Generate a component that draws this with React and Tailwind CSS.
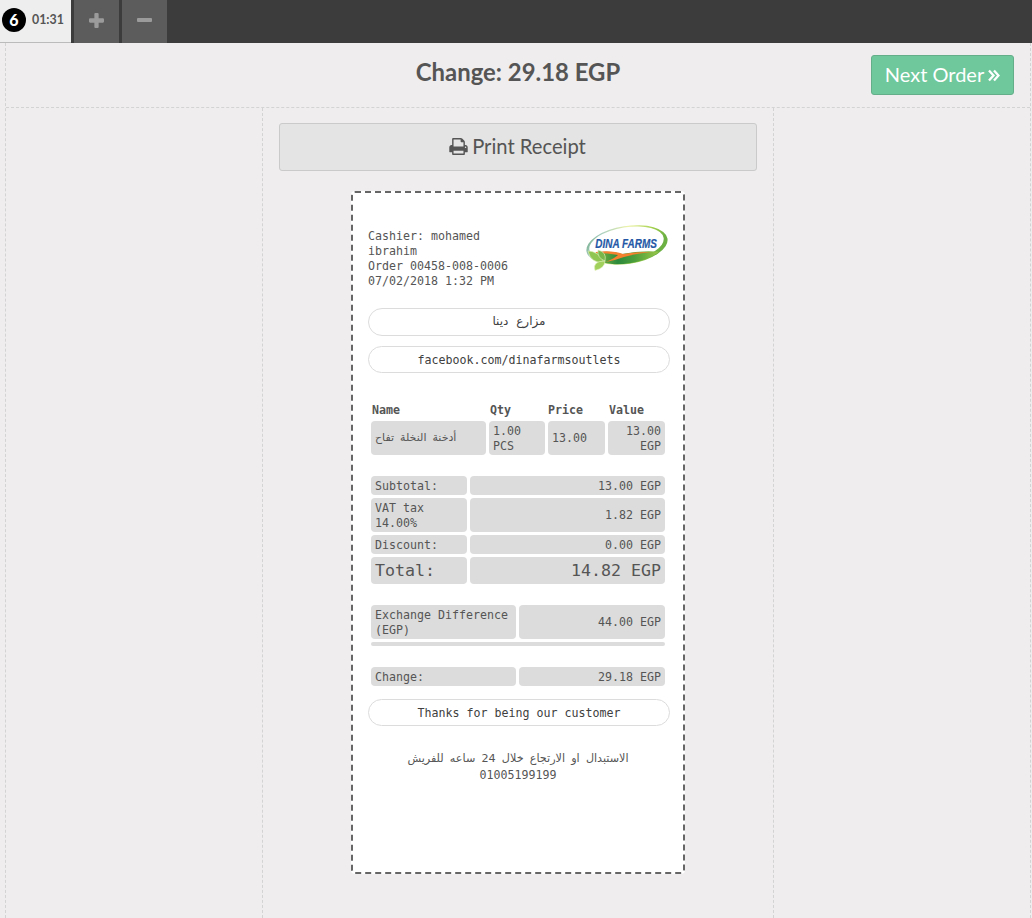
import React from "react";

const cell = "flex items-center rounded-[4px] bg-[#dcdcdc] px-1 leading-[15px]";
const pill =
  "flex w-[302px] shrink-0 items-center justify-center rounded-full border border-[#dcdcdc] text-[#404040]";
const arabic = "font-['DejaVu_Sans',sans-serif]";

function PrintIcon() {
  return (
    <svg viewBox="64 128 1664 1536" className="h-[17px] w-[19px]" fill="currentColor">
      <path d="M448 1536h896v-256h-896v256zm0-640h896v-384h-160q-40 0-68-28t-28-68v-160h-640v640zm1152 64q0-26-19-45t-45-19-45 19-19 45 19 45 45 19 45-19 19-45zm128 0v416q0 13-9.5 22.5t-22.5 9.5h-224v160q0 40-28 68t-68 28h-960q-40 0-68-28t-28-68v-160h-224q-13 0-22.5-9.5t-9.5-22.5v-416q0-79 56.5-135.5t135.5-56.5h64v-544q0-40 28-68t68-28h672q40 0 88 20t76 48l152 152q28 28 48 76t20 88v256h64q79 0 135.5 56.5t56.5 135.5z" />
    </svg>
  );
}

function Logo() {
  return (
    <svg viewBox="0 0 82 46" className="h-[46px] w-[82px] shrink-0">
      <defs>
        <linearGradient id="ring" x1="0" y1="0" x2="1" y2="0.35">
          <stop offset="0" stopColor="#4f9468" />
          <stop offset="0.22" stopColor="#a9cfc0" />
          <stop offset="0.5" stopColor="#eef3a8" />
          <stop offset="0.8" stopColor="#a3d04c" />
          <stop offset="1" stopColor="#6cb043" />
        </linearGradient>
        <linearGradient id="field" x1="0" y1="0" x2="1" y2="0">
          <stop offset="0" stopColor="#8fbf3f" />
          <stop offset="0.35" stopColor="#2c8a3c" />
          <stop offset="0.6" stopColor="#4c9f3c" />
          <stop offset="1" stopColor="#a5cc4b" />
        </linearGradient>
        <clipPath id="oval">
          <ellipse cx="41" cy="20" rx="39.5" ry="18.5" transform="rotate(-9 41 20)" />
        </clipPath>
      </defs>
      <ellipse cx="41" cy="20" rx="41" ry="19" transform="rotate(-9 41 20)" fill="url(#ring)" />
      <ellipse cx="40.5" cy="18.8" rx="37.6" ry="16.6" transform="rotate(-9 40.5 18.8)" fill="#fff" />
      <g clipPath="url(#oval)">
        <path d="M8 28Q24 25 36 29Q56 25 76 27L66 42H10z" fill="url(#field)" />
        <path d="M10 27Q26 25 37 29Q50 26.5 66 27Q48 29 38 32Q30 35 20 37Q29 33 32 30Q22 28 10 28z" fill="#f4812e" />
      </g>
      <path d="M2 26Q12 26 18 37Q5 39 2 26z" fill="#8fc652" stroke="#e5f2c4" strokeWidth=".6" />
      <path d="M12 25Q21 27 19 36Q11 33 12 25z" fill="#79b74b" stroke="#e5f2c4" strokeWidth=".6" />
      <path d="M19 36Q19 43 9 45.5Q6 36 19 36z" fill="#a2d05c" stroke="#e5f2c4" strokeWidth=".6" />
      <text
        transform="translate(9.3 23) scale(.83 1)"
        className="font-['Liberation_Sans',sans-serif] text-[12px] font-bold italic"
        fill="#2458a6"
        stroke="#2458a6"
        strokeWidth=".2"
      >
        DINA FARMS
      </text>
    </svg>
  );
}

function Row({ label, value, left, height, large }) {
  return (
    <div className={`flex gap-[3px] ${height} ${large ? "text-[16.62px]" : ""}`}>
      <div className={`${cell} ${left} ${large ? "" : height === "h-[34px]" ? "pt-px" : "pt-0.5"}`}>{label}</div>
      <div className={`${cell} flex-1 justify-end whitespace-pre ${large ? "" : "pt-px"}`}>{value}</div>
    </div>
  );
}

export default function App() {
  return (
    <div className="flex h-[918px] w-[1032px] flex-col overflow-hidden bg-[#efedee] font-['Lato',sans-serif] text-[#555]">
      <header className="flex h-[43px] shrink-0 gap-[3px] bg-[#3c3c3c]">
        <div className="flex w-[71px] items-center border-b border-[#bbb] bg-[#eee] pb-[3px] pl-[2px]">
          <span className="flex size-6 items-center justify-center rounded-full bg-black text-base font-black text-white">
            6
          </span>
          <span className="ml-[6px] text-[12.4px] leading-4 font-bold">01:31</span>
        </div>
        <div className="flex w-[45px] items-center justify-center bg-[#5c5c5c] pb-[3px]">
          <svg viewBox="0 0 14 14" className="size-[15px]" fill="#9b9b9b">
            <path d="M6 0h2q1 0 1 1v4h4q1 0 1 1v2q0 1-1 1H9v4q0 1-1 1H6q-1 0-1-1V9H1Q0 9 0 8V6q0-1 1-1h4V1q0-1 1-1z" />
          </svg>
        </div>
        <div className="flex w-[45px] items-center justify-center bg-[#5c5c5c] pb-[3px]">
          <div className="h-1 w-[15px] rounded-[1px] bg-[#9b9b9b]" />
        </div>
      </header>

      <div className="ml-[5px] flex w-[1026px] flex-1 flex-col border-x border-dashed border-[#d4d3d4]">
        <div className="grid h-[65px] shrink-0 grid-cols-[1fr_auto_1fr] items-start border-b border-dashed border-[#d4d3d4] pr-4">
          <div />
          <h1 className="pt-[11px] pl-[16px] text-[23.9px] leading-9 font-bold">Change: 29.18 EGP</h1>
          <button className="mt-3 flex h-10 w-[143px] items-center justify-center gap-1 justify-self-end rounded-[3px] border border-[#64af8a] bg-[#6ec89b] pb-0.5 text-[20px] text-white">
            Next Order
            <svg viewBox="0 0 12 13" className="mt-0.5 h-[13px] w-3" fill="none" stroke="currentColor" strokeWidth="2.3">
              <path d="M1 1.5l4.5 5L1 11.5M6 1.5l4.5 5L6 11.5" />
            </svg>
          </button>
        </div>
        <div className="flex flex-1 justify-center">
          <main className="flex w-[512px] flex-col items-center border-x border-dashed border-[#d4d3d4] pt-[15px]">
            <button className="flex h-12 w-[478px] shrink-0 items-center justify-center gap-1 rounded-[3px] border border-[#cacaca] bg-[#e4e4e4] pr-px pb-0.5 text-[20.2px]">
              <PrintIcon />
              Print Receipt
            </button>
            <section className="mt-5 flex h-[683px] w-[334px] shrink-0 flex-col rounded-[4px] border-2 border-dashed border-[#666] bg-white px-[15px] font-['DejaVu_Sans_Mono',monospace] text-[11.63px] leading-[15px]">
              <div className="mt-[32px] flex h-[83px] items-start justify-between">
                <div className="pt-[4px]">
                  Cashier: mohamed
                  <br />
                  ibrahim
                  <br />
                  Order 00458-008-0006
                  <br />
                  07/02/2018 1:32 PM
                </div>
                <Logo />
              </div>
              <div className={`${pill} ${arabic} h-7 pb-px text-[12px] [word-spacing:4px]`} dir="rtl">مزارع دينا</div>
              <div className={`${pill} mt-[10px] h-[27px] pt-0.5`}>facebook.com/dinafarmsoutlets</div>

              <div className="mt-[30px] ml-[3px] flex w-[294px] flex-col">
                <div className="grid grid-cols-[115px_56px_57px_57px] gap-x-[3px] gap-y-[3px]">
                  <b className="pl-px">Name</b>
                  <b className="pl-px">Qty</b>
                  <b>Price</b>
                  <b className="pl-px">Value</b>
                  <div className={`${cell} ${arabic} h-[34px] pb-0.5 text-[11px] [word-spacing:2.5px]`}>
                    <span dir="rtl">أدخنة النخلة تفاح</span>
                  </div>
                  <div className={`${cell} pt-0.5`}>1.00<br />PCS</div>
                  <div className={cell}>13.00</div>
                  <div className={`${cell} justify-end pt-0.5 text-right`}>13.00<br />EGP</div>
                </div>
                <div className="mt-[21px] flex flex-col gap-[3px]">
                  <Row label="Subtotal:" value="13.00 EGP" left="w-24" height="h-[19px]" />
                  <Row label="VAT tax 14.00%" value="1.82 EGP" left="w-24" height="h-[34px]" />
                  <Row label="Discount:" value="0.00 EGP" left="w-24" height="h-[19px]" />
                  <Row label="Total:" value="14.82 EGP" left="w-24" height="h-[27px]" large />
                </div>
                <div className="mt-[21px] flex flex-col gap-[3px]">
                  <Row label="Exchange Difference (EGP)" value="44.00 EGP" left="w-[145px]" height="h-[34px]" />
                  <div className="h-1 rounded-[2px] bg-[#dcdcdc]" />
                </div>
                <div className="mt-[21px]">
                  <Row label="Change:" value="29.18 EGP" left="w-[145px]" height="h-[19px]" />
                </div>
              </div>
              <div className={`${pill} mt-[13px] h-[27px] pt-0.5`}>Thanks for being our customer</div>
              <div className="mt-6 text-center leading-[17px]">
                <div className={`${arabic} text-[11.2px] [word-spacing:2.6px]`} dir="rtl">الاستبدال او الارتجاع خلال 24 ساعه للفريش</div>
                <div>01005199199</div>
              </div>
            </section>
          </main>
        </div>
      </div>
    </div>
  );
}
